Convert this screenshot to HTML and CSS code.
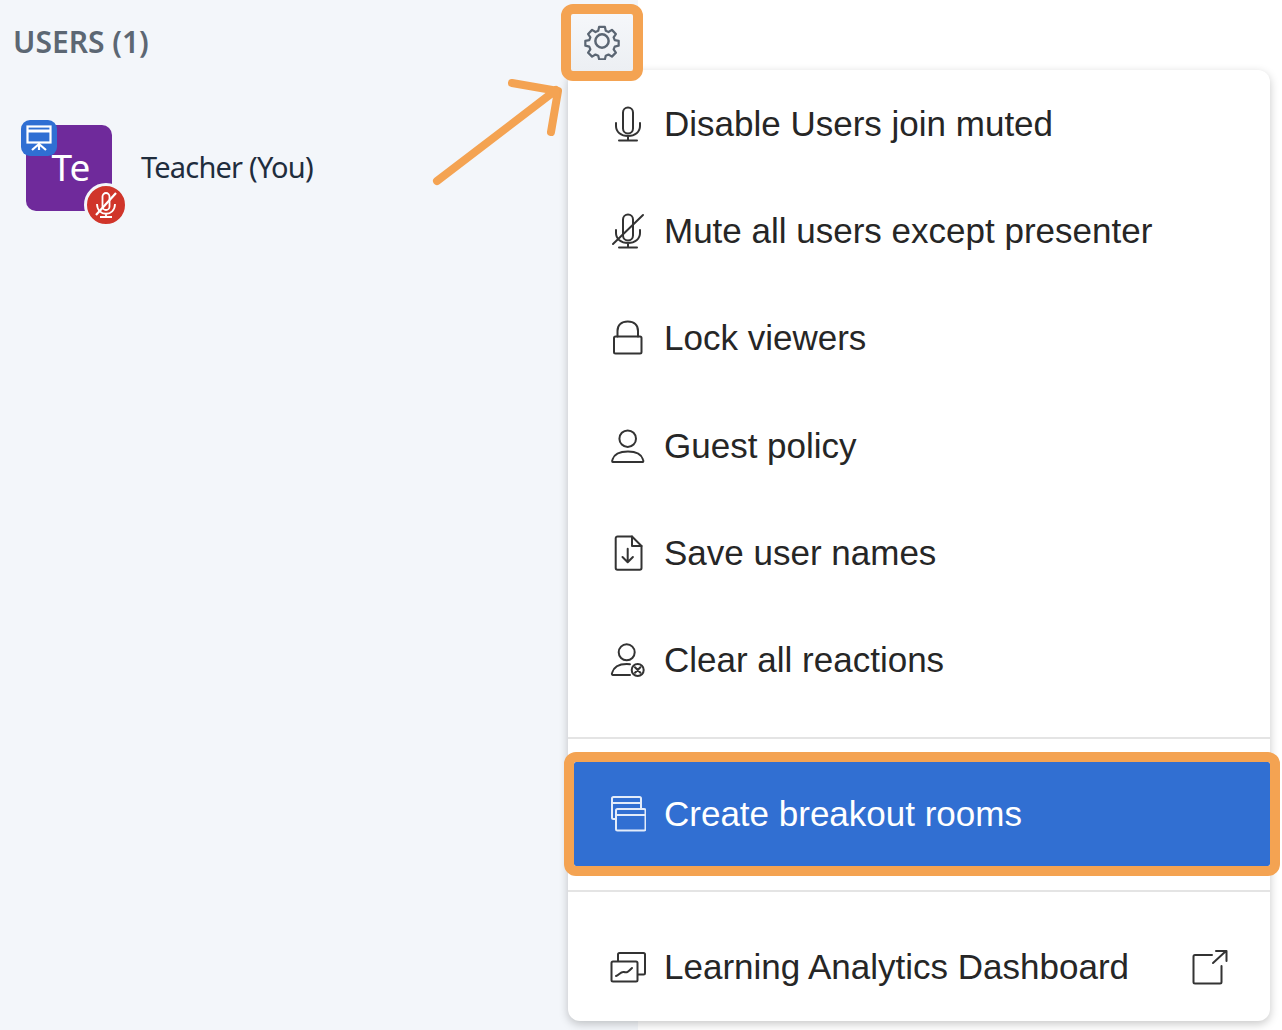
FILE: index.html
```html
<!DOCTYPE html>
<html lang="en">
<head>
<meta charset="UTF-8">
<meta name="viewport" content="width=device-width, initial-scale=1.0">
<title>Users menu</title>
<link rel="stylesheet" href="styles.css">
</head>
<body>
<div class="sidebar">
  <div class="users-header">
    <h2 class="users-title">USERS (1)</h2>
    <button class="gear-btn">
      <svg width="38" height="38" viewBox="0 0 40 40" fill="none" stroke="#5b6673" stroke-width="2.6" stroke-linejoin="round">
        <path d="M16.6 3.5h6.8l1 4.6 3.2 1.4 4-2.5 4.6 4.9-2.600 3.900 1.300 3.100 4.600 1v5.600l-4.600 1-1.300 3.200 2.600 3.900-4.600 4.700-4-2.500-3.200 1.400-1 4.200h-6.800l-1-4.200-3.200-1.400-4 2.500-4.600-4.700 2.600-3.900-1.300-3.200-4.600-1v-5.600l4.600-1 1.300-3.100-2.600-3.900 4.600-4.900 4 2.500 3.200-1.400z" transform="translate(2 2) scale(.9)"/>
        <circle cx="20" cy="20" r="7"/>
      </svg>
    </button>
  </div>
  <div class="user-row">
    <div class="avatar">Te
      <span class="badge-presenter">
        <svg width="30" height="30" viewBox="0 0 30 30" fill="none" stroke="#fff" stroke-width="2.2">
          <rect x="3.500" y="3.500" width="23" height="16"/>
          <path d="M3.500 8h23" stroke-width="3"/>
          <path d="M15 19.500V27M15 21l-7 6M15 21l7 6"/>
        </svg>
      </span>
      <span class="badge-muted">
        <svg width="30" height="30" viewBox="0 0 30 30" fill="none" stroke="#fff" stroke-width="1.800">
          <rect x="11.500" y="3" width="7" height="17" rx="3.500"/>
          <path d="M6 14c0 13 18 13 18 0M15 23v3M9 27h12"/>
          <path d="M5 25L25 3" stroke-width="2.200"/>
        </svg>
      </span>
    </div>
    <span class="user-name">Teacher (You)</span>
  </div>
</div>

<svg class="arrow" width="140" height="120" viewBox="430 75 140 120" fill="none" stroke="#f4a352" stroke-width="8" stroke-linecap="round" stroke-linejoin="round">
  <path d="M437 181L556 90M512 83l46 8-7 41"/>
</svg>

<div class="menu">
  <div class="menu-item">
    <svg class="icon" viewBox="0 0 36 40">
      <rect x="13" y="3.500" width="10" height="26" rx="5"/>
      <path d="M6 19v3c0 6 5 10 12 10s12-4 12-10v-3M18 32v4M9 36.500h18"/>
    </svg>
    <span>Disable Users join muted</span>
  </div>
  <div class="menu-item">
    <svg class="icon" viewBox="0 0 36 40">
      <rect x="13" y="3.500" width="10" height="26" rx="5"/>
      <path d="M6 19v3c0 6 5 10 12 10s12-4 12-10v-3M18 32v4M9 36.500h18M3 33L33 4"/>
    </svg>
    <span>Mute all users except presenter</span>
  </div>
  <div class="menu-item">
    <svg class="icon" viewBox="0 0 36 40">
      <rect x="4" y="18.500" width="27.500" height="17" rx="1.500"/>
      <path d="M7.500 18.500V13c0-6 4-9.500 10.300-9.500S28 7 28 13v5.500"/>
    </svg>
    <span>Lock viewers</span>
  </div>
  <div class="menu-item">
    <svg class="icon" viewBox="0 0 36 40">
      <circle cx="17.700" cy="12.700" r="8.300"/>
      <path d="M3 36h29.500c1 0 1-1 .5-2.500C31.500 28.500 26 25.500 18 25.500S4 28.500 2.500 33.500C2 35 2 36 3 36z"/>
    </svg>
    <span>Guest policy</span>
  </div>
  <div class="menu-item">
    <svg class="icon" viewBox="0 0 36 40">
      <path d="M7.500 3.500h14.500l9.500 9.500v22c0 1-.8 1.700-1.700 1.700H7.500c-1 0-1.800-.7-1.800-1.700V5.200c0-1 .8-1.700 1.800-1.700z"/>
      <path d="M22 3.500V13h9.500M17.700 15.700V29M12.500 24l5.200 5.200 5.200-5.200"/>
    </svg>
    <span>Save user names</span>
  </div>
  <div class="menu-item">
    <svg class="icon" viewBox="0 0 36 40">
      <circle cx="16.700" cy="12.300" r="8"/>
      <path d="M20 24.300c-1-.2-2-.3-3.300-.3C9 24 3.500 27.500 2 33c-.3 1 0 2 1 2h17"/>
      <circle cx="27.700" cy="30" r="6"/>
      <path d="M25 27.300l5.400 5.400M30.400 27.300L25 32.700"/>
    </svg>
    <span>Clear all reactions</span>
  </div>

  <div class="divider divider-top"></div>

  <div class="menu-item menu-item-active">
    <svg class="icon" viewBox="0 0 36 40">
      <path d="M6 25H3.500c-1 0-1.500-.7-1.500-1.500V4.500C2 3.700 2.500 3 3.500 3h26c1 0 1.500.7 1.500 1.500V15"/>
      <path d="M2 9h29"/>
      <rect x="6" y="15" width="29.500" height="21.500" rx="1.500"/>
      <path d="M6 21h29.500"/>
    </svg>
    <span>Create breakout rooms</span>
  </div>

  <div class="divider divider-bottom"></div>

  <div class="menu-item menu-item-last">
    <svg class="icon" viewBox="0 0 36 40">
      <path d="M8 14V7.500C8 6.500 8.700 6 9.500 6h24c1 0 1.500.5 1.500 1.500V26c0 1-.5 1.500-1.500 1.500H28"/>
      <rect x="1.500" y="14.500" width="26" height="20" rx="1.500"/>
      <path d="M6 29c3-1 5-5 8-4s4 0 8-4"/>
    </svg>
    <span>Learning Analytics Dashboard</span>
    <svg class="icon icon-external" viewBox="0 0 36 40">
      <path d="M20 8H3c-1 0-1.500.5-1.500 1.500V35c0 1 .5 1.500 1.500 1.500h25c1 0 1.500-.5 1.500-1.500V19"/>
      <path d="M21 16L34 4M24 4h10.500v10"/>
    </svg>
  </div>
</div>
</body>
</html>
```

FILE: styles.css
```css
body {
  margin: 0;
  width: 1282px;
  height: 1030px;
  overflow: hidden;
  position: relative;
  background-color: white;
  font-family: "Liberation Sans", Arial, sans-serif;
}
.sidebar {
  width: 638px;
  height: 1030px;
  background-color: #f3f6fa;
  font-family: "Noto Sans", sans-serif;
}
.users-header {
  display: flex;
  justify-content: space-between;
  padding: 4px 0 0 13px;
}
.users-title {
  margin: 16px 0 0;
  font-size: 30px;
  line-height: 44px;
  font-weight: 600;
  color: #5c6773;
}
.gear-btn {
  position: relative;
  z-index: 2;
  width: 82px;
  height: 77px;
  margin-right: -5px;
  padding: 0 0 4px;
  border: 10px solid #f4a352;
  border-radius: 12px;
  background: linear-gradient(#f5f7fa, #eceff3) padding-box;
  display: flex;
  align-items: center;
  justify-content: center;
  box-sizing: border-box;
}
.user-row {
  display: flex;
  align-items: center;
  gap: 29px;
  margin: 44px 0 0 26px;
}
.avatar {
  width: 86px;
  height: 86px;
  position: relative;
  display: flex;
  align-items: center;
  justify-content: center;
  padding: 0 0 2px 4px;
  box-sizing: border-box;
  border-radius: 10px;
  background-color: #6f2a9b;
  color: white;
  font-size: 37px;
  line-height: 84px;
}
.badge-presenter {
  position: absolute;
  left: -5px;
  top: -5px;
  width: 36px;
  height: 36px;
  border-radius: 9px;
  background-color: #2f6fd3;
  display: flex;
  align-items: center;
  justify-content: center;
}
.badge-muted {
  position: absolute;
  left: 58px;
  top: 58px;
  width: 38px;
  height: 38px;
  border: 3px solid #f3f6fa;
  border-radius: 50%;
  background-color: #d0352a;
  display: flex;
  align-items: center;
  justify-content: center;
}
.user-name {
  margin-top: -4px;
  font-size: 29px;
  letter-spacing: -0.8px;
  color: #1f2d3d;
}
.arrow {
  position: absolute;
  left: 430px;
  top: 75px;
}
.menu {
  position: absolute;
  left: 568px;
  top: 70px;
  width: 702px;
  height: 951px;
  border-radius: 12px;
  background-color: white;
  box-shadow: 0 3px 10px rgba(0, 0, 0, 0.22);
  display: flex;
  flex-direction: column;
}
.menu-item {
  display: flex;
  align-items: center;
  gap: 18px;
  height: 107.33px;
  padding-left: 42px;
  flex-shrink: 0;
  font-size: 35px;
  color: #262626;
}
.icon {
  width: 36px;
  height: 40px;
  flex-shrink: 0;
  fill: none;
  stroke: #333;
  stroke-width: 2;
  stroke-linecap: round;
  stroke-linejoin: round;
}
.divider {
  height: 2px;
  background-color: #e4e4e4;
  flex-shrink: 0;
}
.divider-top {
  margin: 23px 0 13px;
}
.divider-bottom {
  margin: 14px 0 22px;
}
.menu-item-active {
  width: 716px;
  height: 124px;
  margin-left: -4px;
  padding-left: 36px;
  box-sizing: border-box;
  border: 10px solid #f4a352;
  border-radius: 12px;
  background: #316fd2 padding-box;
  color: white;
}
.menu-item-active .icon {
  stroke: #e3ecfa;
}
.menu-item-last {
  height: 107px;
}
.icon-external {
  margin-left: auto;
  margin-right: 42px;
}
```
